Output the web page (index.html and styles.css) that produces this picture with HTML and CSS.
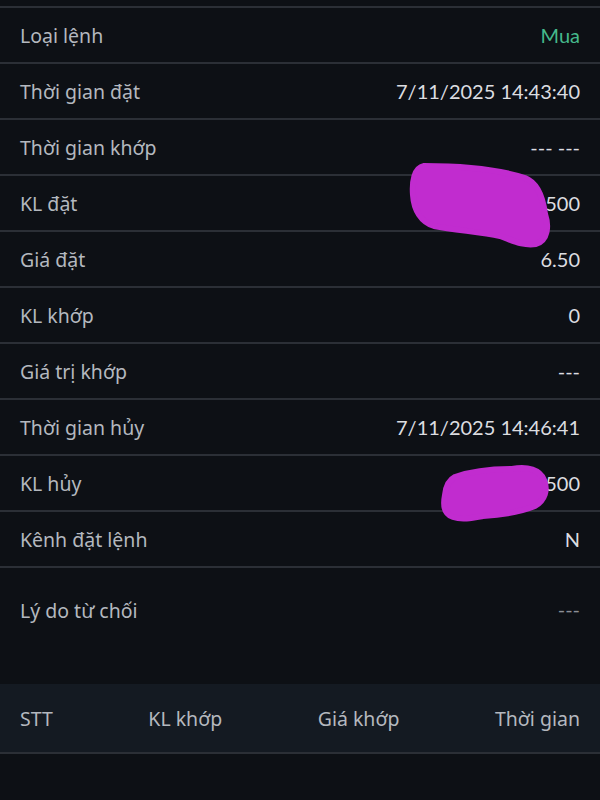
FILE: index.html
```html
<!DOCTYPE html>
<html lang="vi">
<head>
  <meta charset="UTF-8" />
  <meta name="viewport" content="width=device-width, initial-scale=1.0" />
  <title>Chi tiết lệnh</title>
  <link rel="stylesheet" href="styles.css">
</head>
<body>
  <div class="details">
    <div class="row row-cut"></div>

    <div class="row">
      <span class="label">Loại lệnh</span>
      <span class="value buy">Mua</span>
    </div>
    <div class="row">
      <span class="label">Thời gian đặt</span>
      <span class="value">7/11/2025 14:43:40</span>
    </div>
    <div class="row">
      <span class="label">Thời gian khớp</span>
      <span class="value">--- ---</span>
    </div>
    <div class="row">
      <span class="label">KL đặt</span>
      <span class="value">500</span>
    </div>
    <div class="row">
      <span class="label">Giá đặt</span>
      <span class="value">6.50</span>
    </div>
    <div class="row">
      <span class="label">KL khớp</span>
      <span class="value">0</span>
    </div>
    <div class="row">
      <span class="label">Giá trị khớp</span>
      <span class="value">---</span>
    </div>
    <div class="row">
      <span class="label">Thời gian hủy</span>
      <span class="value">7/11/2025 14:46:41</span>
    </div>
    <div class="row">
      <span class="label">KL hủy</span>
      <span class="value">500</span>
    </div>
    <div class="row">
      <span class="label">Kênh đặt lệnh</span>
      <span class="value">N</span>
    </div>
    <div class="row row-tall">
      <span class="label">Lý do từ chối</span>
      <span class="value dim">---</span>
    </div>

    <div class="match-head">
      <span>STT</span>
      <span>KL khớp</span>
      <span>Giá khớp</span>
      <span>Thời gian</span>
    </div>

    <!-- marker scribbles over the hidden numbers -->
    <svg class="scribble scribble-1" viewBox="405 158 152 95" width="152" height="95">
      <path d="M424 166 C465 166 500 170 525 178 C538 183 543 198 545 214 C549 226 548 240 536 244 C522 246 512 240 500 236 C480 232 455 230 434 226 C421 222 414 210 413 195 C412 182 414 168 424 166 Z" />
    </svg>
    <svg class="scribble scribble-2" viewBox="435 460 120 68" width="120" height="68">
      <path d="M455 477 C475 470 495 469 512 469 C528 466 540 470 544 480 C548 490 545 500 535 506 C520 512 500 515 483 516 C472 518 462 520 453 517 C444 514 443 505 445 495 C446 486 449 480 455 477 Z" />
    </svg>
  </div>
</body>
</html>
```
FILE: styles.css
```css
:root {
  --bg: #0d1015;
  --head-bg: #141a22;
  --line: #2b2f36;
  --label: #b4b8bf;
  --value: #dcdde0;
  --green: #45b98c;
  --marker: #c12ccf;
}

* {
  box-sizing: border-box;
}

body {
  margin: 0;
  background: var(--bg);
  font-family: 'Noto Sans', 'Lato', sans-serif;
  font-size: 19.5px;
}

.details {
  position: relative;
  width: 600px;
}

.row {
  display: flex;
  align-items: center;
  justify-content: space-between;
  height: 56px;
  padding: 0 20px;
  border-bottom: 2px solid var(--line);
}

.row-cut {
  height: 8px;
}

.row-tall {
  height: 116px;
  align-items: flex-start;
  padding-top: 29px;
  border-bottom: none;
}

.label {
  color: var(--label);
}

.value {
  font-family: 'Lato', sans-serif;
  font-size: 20px;
  color: var(--value);
}

.value.buy {
  color: var(--green);
}

.value.dim {
  color: #8b8f96;
}

.match-head {
  display: flex;
  justify-content: space-between;
  align-items: center;
  height: 70px;
  padding: 0 20px;
  background: var(--head-bg);
  border-bottom: 2px solid var(--line);
  color: var(--label);
}

.scribble {
  position: absolute;
  fill: var(--marker);
  stroke: var(--marker);
  stroke-width: 6;
  stroke-linejoin: round;
}

.scribble-1 {
  left: 405px;
  top: 158px;
}

.scribble-2 {
  left: 435px;
  top: 460px;
}
```
